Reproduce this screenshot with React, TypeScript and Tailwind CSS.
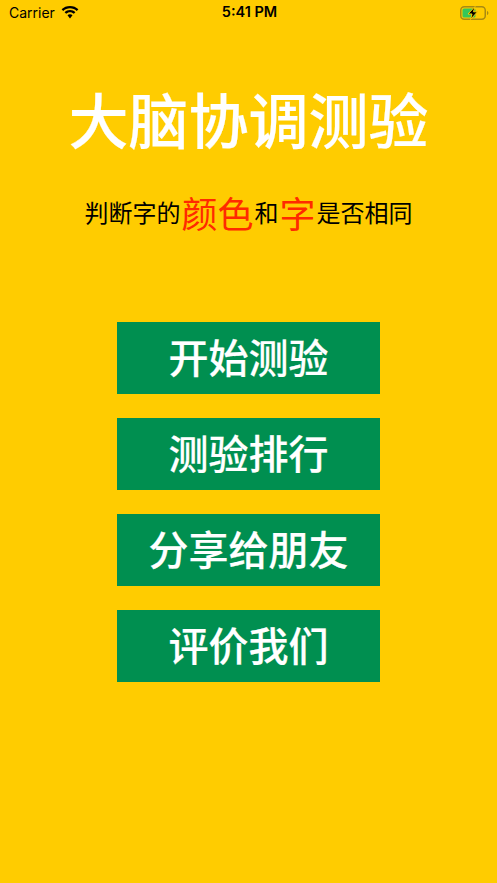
const cjk = "font-['Noto_Sans_CJK_SC',sans-serif]";

function Battery() {
  return (
    <svg width="30" height="14" viewBox="0 0 30 14" className="block">
      <rect x="0.75" y="0.75" width="24.500" height="12.500" rx="3.500" fill="none" stroke="#a88a12" strokeWidth="1.500" />
      <rect x="2.500" y="2.500" width="13" height="9" rx="1.500" fill="#35c759" />
      <path d="M27 5v4c.8-.3 1.400-1.100 1.400-2s-.6-1.700-1.400-2z" fill="#a88a12" />
      <path d="M15 0.500 8 8h4l-1.500 5.500 7-7.700h-4z" fill="#000" stroke="#ffcc00" strokeWidth="1" />
    </svg>
  );
}

function Wifi() {
  return (
    <svg width="18" height="13" viewBox="0 0 18 13" className="block">
      <path d="M9 2.200c2.600 0 5 1 6.800 2.700L17.400 3.300C15.200 1.200 12.300 0 9 0S2.800 1.200.6 3.300l1.600 1.600C4 3.200 6.400 2.200 9 2.200z" fill="#000" />
      <path d="M9 6.300c1.500 0 2.800.6 3.800 1.500l1.600-1.600C13 4.900 11.100 4.100 9 4.100s-4 .8-5.400 2.100l1.600 1.600c1-.9 2.300-1.500 3.800-1.500z" fill="#000" />
      <path d="M9 8.200c-1 0-1.900.4-2.500 1L9 12.600l2.500-3.400c-.6-.6-1.500-1-2.500-1z" fill="#000" />
    </svg>
  );
}

const buttons = ["开始测验", "测验排行", "分享给朋友", "评价我们"];

export default function App() {
  return (
    <div className={`h-[883px] w-[497px] overflow-hidden bg-[#ffcc00] ${cjk}`}>
      <div className="flex h-[25px] items-center justify-between pl-[9px] pr-[7px] text-black">
        <div className="flex w-[100px] items-center gap-[6px]">
          <span className="font-['Inter',sans-serif] text-[14px] leading-none">Carrier</span>
          <Wifi />
        </div>
        <span className="font-['Inter',sans-serif] text-[14.5px] font-semibold leading-none">5:41 PM</span>
        <div className="flex w-[100px] justify-end">
          <Battery />
        </div>
      </div>
      <h1 className="mt-[53px] h-[80px] text-center text-[60px] font-medium leading-[80px] text-white [-webkit-text-stroke:0.2px_white]">大脑协调测验</h1>
      <p className="mt-[29px] flex h-[50px] items-center justify-center text-[24px] leading-[50px] text-black">
        判断字的<span className="mx-[1px] text-[36px] text-[#ff2a00]">颜色</span>和<span className="mx-[1px] text-[36px] text-[#ff2a00]">字</span>是否相同
      </p>
      <div className="mt-[85px] flex flex-col items-center gap-[24px]">
        {buttons.map((b) => (
          <button key={b} className="h-[72px] w-[263px] bg-[#008f50] pb-[4px] text-center text-[40px] font-medium leading-[68px] text-white [-webkit-text-stroke:0.2px_white]">
            {b}
          </button>
        ))}
      </div>
    </div>
  );
}
